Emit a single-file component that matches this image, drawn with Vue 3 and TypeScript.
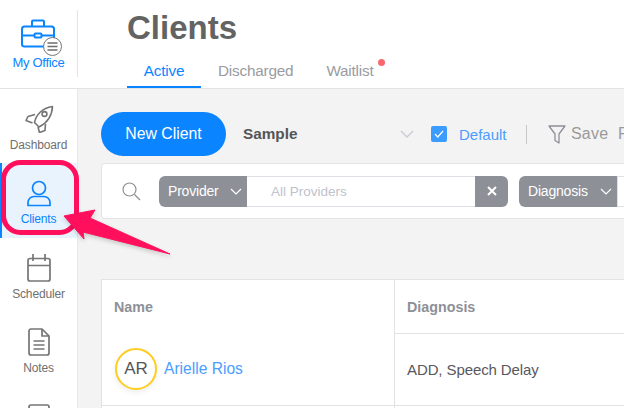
<script setup lang="ts">
const tabs = [
  { label: 'Active', active: true },
  { label: 'Discharged', active: false },
  { label: 'Waitlist', active: false, dot: true },
]
</script>

<template>
  <div class="page">
    <header class="top">
      <div class="office">
        <div class="office-inner">
          <svg class="brief" width="36" height="30" viewBox="0 0 36 30" fill="none" stroke="#0a84ff" stroke-width="2">
            <rect x="2" y="7.5" width="32" height="20" rx="2.5" />
            <path d="M12 7V2.500a1 1 0 0 1 1-1h10a1 1 0 0 1 1 1V7" />
            <path d="M2 16.500h12.500M21.500 16.500H34" />
            <rect x="14.500" y="14.500" width="7" height="4" rx="1" />
          </svg>
          <span class="menu-badge">
            <svg width="11" height="9" viewBox="0 0 11 9" stroke="#6d6d6d" stroke-width="1.300"><path d="M.5 1h10M.5 4.500h10M.5 8h10" /></svg>
          </span>
          <span class="office-label">My Office</span>
        </div>
      </div>
      <div class="heading">
        <h1>Clients</h1>
        <nav class="tabs">
          <a v-for="t in tabs" :key="t.label" class="tab" :class="{ on: t.active }">
            {{ t.label }}<i v-if="t.dot" class="dot"></i>
          </a>
        </nav>
      </div>
    </header>

    <div class="body">
      <aside class="side">
        <div class="item">
          <svg class="icon" width="30" height="28" viewBox="0 0 30 28" fill="none" stroke="#757575" stroke-width="1.600" stroke-linejoin="round">
            <path d="M10.500 17.500C12 10 18 3 28.500 1.500 28 11 23 18 15 22Z" />
            <circle cx="20.500" cy="9" r="2.400" />
            <path d="M11 9.500 4 11.500 2 15.500l6.500 2.500M21.500 19l-.5 6.500-5.500 2-1.500-5.500" />
          </svg>
          <span>Dashboard</span>
        </div>
        <div class="item current">
          <svg class="icon" width="26" height="28" viewBox="0 -1.500 26 28" fill="none" stroke="#0a84ff" stroke-width="1.700">
            <circle cx="13" cy="7.500" r="6.500" />
            <path d="M2 25v-3a6 6 0 0 1 6-6h10a6 6 0 0 1 6 6v3Z" stroke-linejoin="round" />
          </svg>
          <span>Clients</span>
        </div>
        <div class="item">
          <svg class="icon" width="26" height="28" viewBox="0 0 26 28" fill="none" stroke="#757575" stroke-width="1.700">
            <rect x="2" y="4.500" width="22" height="22.500" rx="2" />
            <path d="M2 11.500h22M7 0v7M19 0v7" />
          </svg>
          <span>Scheduler</span>
        </div>
        <div class="item">
          <svg class="icon" width="22" height="28" viewBox="0 0 22 28" fill="none" stroke="#757575" stroke-width="1.700" stroke-linejoin="round">
            <path d="M3 1h11l7 7v17a2 2 0 0 1-2 2H3a2 2 0 0 1-2-2V3a2 2 0 0 1 2-2Z" />
            <path d="M14 1v7h7M5.500 13h11M5.500 17h11M5.500 21h11" />
          </svg>
          <span>Notes</span>
        </div>
        <div class="item">
          <svg class="icon" width="26" height="28" viewBox="0 0 26 28" fill="none" stroke="#757575" stroke-width="1.700">
            <rect x="3" y="3" width="20" height="24" rx="2" />
          </svg>
        </div>
      </aside>

      <main class="main">
        <div class="toolbar">
          <button class="new">New Client</button>
          <strong class="sample">Sample</strong>
          <svg class="chev-light" width="14" height="8" viewBox="0 0 14 8" fill="none" stroke="#c9ccd6" stroke-width="1.400"><path d="M1 1l6 6 6-6" /></svg>
          <span class="check">
            <svg width="10" height="8" viewBox="0 0 10 8" fill="none" stroke="#fff" stroke-width="1.200"><path d="M1 4l2.800 3L9 1" /></svg>
          </span>
          <span class="default">Default</span>
          <span class="sep"></span>
          <svg class="funnel" width="18" height="19" viewBox="0 0 18 19" fill="none" stroke="#8f9097" stroke-width="1.300" stroke-linejoin="round">
            <path d="M1 1h16l-6 8v9l-4-2.500V9Z" />
          </svg>
          <span class="save">Save</span>
          <span class="save extra">Filter</span>
        </div>

        <div class="filters">
          <svg class="search" width="19" height="19" viewBox="0 0 19 19" fill="none" stroke="#8f8f8f" stroke-width="1.200">
            <circle cx="7.500" cy="7.500" r="6.500" />
            <path d="M12.500 12.500l5.500 5.500" />
          </svg>
          <div class="filter">
            <span class="tag">Provider
              <svg width="12" height="7" viewBox="0 0 12 7" fill="none" stroke="#fff" stroke-width="1.200"><path d="M1 1l5 5 5-5" /></svg>
            </span>
            <span class="value">All Providers</span>
            <span class="clear">
              <svg width="10" height="10" viewBox="0 0 10 10" fill="none" stroke="#fff" stroke-width="2"><path d="M1 1l8 8M9 1l-8 8" /></svg>
            </span>
          </div>
          <div class="filter">
            <span class="tag wide">Diagnosis
              <svg width="12" height="7" viewBox="0 0 12 7" fill="none" stroke="#fff" stroke-width="1.200"><path d="M1 1l5 5 5-5" /></svg>
            </span>
            <span class="value rest"></span>
          </div>
        </div>

        <div class="table">
          <div class="col name">
            <div class="th">Name</div>
            <div class="td">
              <span class="avatar">AR</span>
              <a class="link">Arielle Rios</a>
            </div>
          </div>
          <div class="col diag">
            <div class="th ruled">Diagnosis</div>
            <div class="td">ADD, Speech Delay</div>
          </div>
        </div>
      </main>
    </div>

    <svg class="callout" width="180" height="105" viewBox="0 0 180 105" fill="none">
      <rect x="3.500" y="2.500" width="73" height="70" rx="17" stroke="#ff0f5c" stroke-width="5" />
      <path class="arrow" d="M64 56 95 50 90 58 170 94 83 72 84 79Z" fill="#ff0f5c" stroke="#ff0f5c" stroke-linejoin="round" />
    </svg>
  </div>
</template>

<style>
html, body { margin: 0; overflow: hidden; background: #fff; }
</style>

<style scoped>
.page {
  position: relative;
  width: 624px;
  height: 408px;
  overflow: hidden;
  font-family: "Liberation Sans", Arial, sans-serif;
  color: #555;
}
.top {
  display: flex;
  height: 88px;
  border-bottom: 1px solid #e2e2e2;
  box-sizing: content-box;
}
.office {
  width: 78px;
  flex: none;
  padding: 10px 0 11px;
  box-sizing: border-box;
}
.office-inner {
  position: relative;
  height: 67px;
  border-right: 1px solid #e4e4e4;
  display: flex;
  flex-direction: column;
  align-items: center;
}
.brief { margin-top: 9px; margin-left: -1px; }
.menu-badge {
  position: absolute;
  left: 43px;
  top: 27px;
  width: 17px;
  height: 17px;
  border: 1px solid #777;
  border-radius: 50%;
  background: #fff;
  display: flex;
  align-items: center;
  justify-content: center;
}
.office-label {
  margin-top: 6px;
  font-size: 13px;
  letter-spacing: -0.300px;
  color: #0a84ff;
}
.heading { padding-left: 49px; }
h1 {
  margin: 9px 0 0;
  font-size: 33px;
  line-height: 38px;
  font-weight: 700;
  color: #636363;
}
.tabs { display: flex; margin-top: 9px; }
.tab {
  position: relative;
  height: 32px;
  line-height: 29px;
  box-sizing: border-box;
  font-size: 15.300px;
  letter-spacing: -0.200px;
  color: #9a9ba1;
}
.tab:nth-child(1) { width: 74px; text-align: center; margin-right: 17px; }
.tab:nth-child(2) { margin-right: 33px; }
.tab.on { color: #0a84ff; border-bottom: 2px solid #0a84ff; }
.dot {
  position: absolute;
  right: -11px;
  top: 3px;
  width: 7px;
  height: 7px;
  border-radius: 50%;
  background: #f9686e;
}
.body { display: flex; height: 319px; }
.side {
  width: 78px;
  flex: none;
  border-right: 1px solid #e8e8e8;
  box-sizing: border-box;
}
.item {
  height: 74px;
  box-sizing: border-box;
  padding-top: 16px;
  display: flex;
  flex-direction: column;
  align-items: center;
  font-size: 12px;
  letter-spacing: -0.150px;
  color: #6f6f6f;
}
.icon { display: block; flex: none; }
.item span { margin-top: 5px; line-height: 14px; }
.current {
  height: 75px;
  background: #e9f3fe;
  color: #0a84ff;
  border-left: 2px solid #0a84ff;
  padding-right: 2px;
}
.main {
  flex: 1;
  min-width: 0;
  background: #f3f3f3;
  padding: 23px 0 0 23px;
  box-sizing: border-box;
}
.toolbar {
  display: flex;
  align-items: center;
  height: 44px;
  white-space: nowrap;
}
.toolbar > * { flex: none; }
.new {
  width: 125px;
  height: 44px;
  border: 0;
  border-radius: 22px;
  background: #0a84ff;
  color: #fff;
  font: 15.800px "Liberation Sans", Arial, sans-serif;
  padding: 0;
}
.sample {
  margin-left: 17px;
  width: 157px;
  font-size: 15.300px;
  color: #555;
}
.check {
  margin-left: 17px;
  width: 16px;
  height: 16px;
  border-radius: 2px;
  background: #3b9bff;
  display: flex;
  align-items: center;
  justify-content: center;
}
.default { margin-left: 12px; width: 47px; font-size: 15px; color: #4b9dff; }
.sep { margin-left: 20px; width: 1px; height: 19px; background: #c8c8c8; }
.funnel { margin-left: 21px; }
.save { margin-left: 5px; width: 37px; font-size: 16px; letter-spacing: 0.200px; color: #9a9a9a; }
.save.extra { margin-left: 10px; }
.filters {
  display: flex;
  align-items: center;
  margin-top: 7px;
  height: 56px;
  background: #fff;
  border: 1px solid #e4e4e4;
  border-right: 0;
  border-radius: 4px 0 0 4px;
  box-sizing: border-box;
  padding-left: 20px;
  width: 560px;
}
.search { flex: none; }
.filter {
  display: flex;
  height: 31px;
  margin-left: 18px;
  flex: none;
}
.filter:last-child { margin-left: 11px; }
.tag {
  display: flex;
  align-items: center;
  justify-content: space-between;
  width: 88px;
  box-sizing: border-box;
  padding: 0 5px 0 9px;
  background: #8e9097;
  border-radius: 6px 0 0 6px;
  color: #fff;
  font-size: 14px;
  letter-spacing: -0.200px;
}
.tag.wide { width: 98px; }
.value {
  width: 228px;
  box-sizing: border-box;
  border-top: 1px solid #dfe0e6;
  border-bottom: 1px solid #dfe0e6;
  padding-left: 24px;
  line-height: 29px;
  font-size: 13.500px;
  color: #c0c2cc;
}
.value.rest { width: 20px; padding: 0; border-left: 1px solid #dfe0e6; }
.clear {
  width: 33px;
  background: #8e9097;
  border-radius: 0 6px 6px 0;
  display: flex;
  align-items: center;
  justify-content: center;
}
.table {
  display: flex;
  margin-top: 60px;
  width: 560px;
  height: 130px;
  background: #fff;
  border-top: 1px solid #e2e2e2;
  border-left: 1px solid #e2e2e2;
  box-sizing: border-box;
}
.col { flex: none; }
.name { width: 292px; border-right: 1px solid #e2e2e2; box-sizing: content-box; }
.diag { flex: 1; }
.th {
  height: 53px;
  line-height: 54px;
  padding-left: 12px;
  font-size: 14.300px;
  font-weight: 700;
  color: #8e9097;
  box-sizing: content-box;
}
.th.ruled { border-bottom: 1px solid #e2e2e2; }
.td {
  display: flex;
  align-items: center;
  height: 72px;
  padding-left: 12px;
  font-size: 15px;
  letter-spacing: -0.100px;
  color: #585860;
  border-bottom: 1px solid #e2e2e2;
}
.name .td { padding-left: 13px; }
.diag .td { height: 71px; }
.avatar {
  width: 42px;
  height: 42px;
  box-sizing: border-box;
  border: 2px solid #ffcd1f;
  border-radius: 50%;
  background: #fff;
  box-shadow: 0 2px 6px rgba(0, 0, 0, 0.08);
  display: flex;
  align-items: center;
  justify-content: center;
  font-size: 17px;
  letter-spacing: 0;
  color: #555;
  flex: none;
}
.link { margin-left: 7px; font-size: 15.600px; letter-spacing: 0; color: #4b9dff; }
.callout {
  position: absolute;
  left: 0;
  top: 160px;
  pointer-events: none;
}
.arrow { filter: drop-shadow(0 2px 2px rgba(0, 0, 0, 0.18)); }
</style>
